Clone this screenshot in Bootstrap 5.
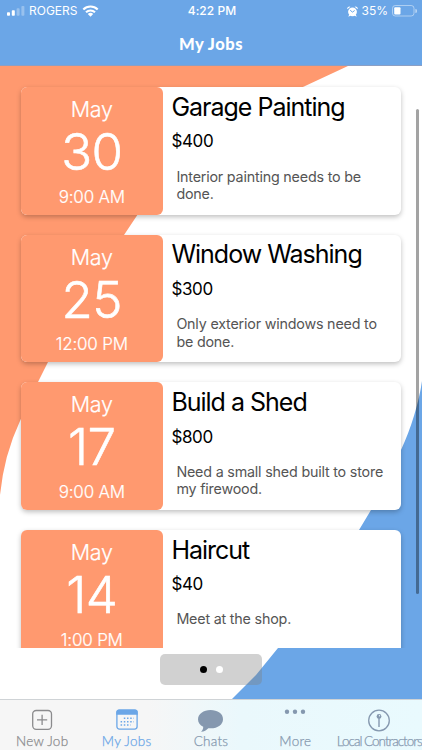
<!DOCTYPE html>
<html lang="en">
<head>
<meta charset="utf-8">
<meta name="viewport" content="width=device-width, initial-scale=1">
<title>My Jobs</title>
<link href="https://cdn.jsdelivr.net/npm/bootstrap@5.3.0/dist/css/bootstrap.min.css" rel="stylesheet">
<style>
  :root { --sky: #6ba6e7; --coral: #ff996f; }
  body { font-family: Inter, "Liberation Sans", sans-serif; color: #000; }
  .phone { height: 750px; width: 422px; }
  .top { height: 66px; background: var(--sky); border-bottom: 1px solid #8c9fc4; }
  .status { height: 22px; font-size: 12px; line-height: 22px; padding: 0 5px 0 7px; }
  .status > div { flex: 1 1 0; }
  .clock { font-weight: 500; letter-spacing: .05px; }
  .heading { font: 900 16.5px/20px Lato, sans-serif; letter-spacing: .5px; padding-top: 12px; }
  .jobs { height: 582px; padding: 21px 20.6px 0 20.6px; gap: 20px; z-index: 1; }
  .job { height: 127.6px; border-radius: 6px; background: #fff; box-shadow: 0 2px 5px rgba(0,0,0,.25); }
  .when { width: 142.4px; border-radius: 6px; background: var(--coral); color: #fff; font-weight: 300; }
  .month { font-size: 21.5px; line-height: 26px; padding-top: 9px; letter-spacing: -.2px; -webkit-text-stroke: .2px #fff; }
  .day { font-size: 51px; line-height: 58px; letter-spacing: -.6px; -webkit-text-stroke: .6px #fff; padding-top: 1px; }
  .hour { font-size: 17px; line-height: 22px; padding-top: 4.8px; letter-spacing: -.2px; -webkit-text-stroke: .2px #fff; }
  .what { padding: 4.8px 8px 0 8.4px; }
  .title { font-size: 25px; line-height: 30px; letter-spacing: -1px; }
  .price { font-size: 17px; line-height: 22px; margin-top: 8.6px; letter-spacing: -.35px; }
  .note { font-size: 14.3px; line-height: 17.5px; margin: 15.2px 0 0 5px; color: #555; letter-spacing: -.19px; }
  .pager { width: 102px; height: 31px; margin: 6px 0 0 160px; border-radius: 5px; background: rgba(128,128,128,.36); gap: 8.5px; z-index: 1; padding-left: 1px; }
  .pager span { width: 7.5px; height: 7.5px; }
  .scroll { right: 3px; top: 43px; width: 3px; height: 485px; background: rgba(0,0,0,.36); z-index: 2; }
  .tabs { height: 51px; border-top: 1px solid #cfd3d6; background: linear-gradient(90deg, #f6f6f6 0 35%, #eaf8fc 57%, #e9fafe); font: 300 13.5px/16px Lato, sans-serif; color: #8b8b8d; letter-spacing: .25px; }
  .tabs > a { flex: 0 0 84.4px; min-width: 0; height: 50px; color: inherit; padding-top: 8px; }
  .tabs svg { height: 24px; }
  .tabs span { margin-top: 1px; white-space: nowrap; -webkit-text-stroke: .25px currentColor; }
  .tabs > a.active { color: var(--sky); }
  .tabs > a.cool { color: #8598af; }
  .tabs > a:last-child { padding-right: 1px; }
  .tabs .tight { letter-spacing: -1px; }
</style>
</head>
<body>
<div class="phone d-flex flex-column overflow-hidden position-relative">
  <header class="top text-white flex-shrink-0">
    <div class="status d-flex">
      <div class="d-flex align-items-center">
        <svg width="18" height="10" viewBox="0 0 18 10" fill="#fff"><rect y="6.3" width="3" height="3.5" rx=".8"/><rect x="4.8" y="4.3" width="3" height="5.5" rx=".8"/><g opacity=".3"><rect x="9.6" y="2.2" width="3" height="7.6" rx=".8"/><rect x="14.4" width="3" height="9.8" rx=".8"/></g></svg>
        <span class="ms-1">ROGERS</span>
        <svg class="ms-1" width="17" height="12" viewBox="0 0 17 12" fill="none" stroke="#fff" stroke-width="2.1"><path d="M1.3 4.5a10.2 10.2 0 0 1 14.4 0M4 7.3a6.4 6.4 0 0 1 9 0"/><path d="M8.5 11.8L5.8 9.1a3.8 3.8 0 0 1 5.4 0z" fill="#fff" stroke="none"/></svg>
      </div>
      <div class="clock text-center">4:22 PM</div>
      <div class="d-flex align-items-center justify-content-end">
        <svg width="11" height="11" viewBox="0 0 11 11"><g fill="#fff"><circle cx="5.5" cy="5.8" r="4.4"/><path d="M.3 3.2A2.2 2.2 0 0 1 3.4.7zM10.7 3.2A2.2 2.2 0 0 0 7.6.7zM1.3 10.7l1-2.4 1.5 1.2zM9.7 10.7l-1-2.4-1.5 1.2z"/></g><path d="M3.2 4.3l2.3 1.8 2.2-1.6" fill="none" stroke="#6ba6e7"/></svg>
        <span class="ms-1">35%</span>
        <svg class="ms-1" width="25" height="12" viewBox="0 0 25 12"><rect x=".5" y=".5" width="21.5" height="10.5" rx="2.8" fill="none" stroke="#fff" stroke-opacity=".45"/><rect x="2.2" y="2.2" width="6.3" height="7.2" rx="1" fill="#fff"/><path d="M23.3 4v4a2 2 0 0 0 0-4z" fill="#fff" opacity=".5"/></svg>
      </div>
    </div>
    <h1 class="heading text-center m-0">My Jobs</h1>
  </header>

  <main class="position-relative flex-grow-1 overflow-hidden">
    <svg class="position-absolute top-0 start-0" width="422" height="633" viewBox="0 66 422 633"><path fill="#ff996f" d="M0 66H348L304 86.500C220 125 170 164 138 214L124 235 48 362 38 382 20 421Q4 455 0 495z"/><path fill="#6ba6e7" d="M422 381C419 402 411 429 401 450L371 510 359 530C335 574 310 609 278 648L256 675 232 699H422z"/></svg>
    <section class="jobs d-flex flex-column overflow-hidden position-relative">
      <article class="job d-flex flex-shrink-0">
        <div class="when text-center flex-shrink-0"><div class="month">May</div><div class="day">30</div><div class="hour">9:00 AM</div></div>
        <div class="what"><h2 class="title m-0 fw-normal">Garage Painting</h2><div class="price">$400</div><p class="note">Interior painting needs to be<br>done.</p></div>
      </article>
      <article class="job d-flex flex-shrink-0">
        <div class="when text-center flex-shrink-0"><div class="month">May</div><div class="day">25</div><div class="hour">12:00 PM</div></div>
        <div class="what"><h2 class="title m-0 fw-normal">Window Washing</h2><div class="price">$300</div><p class="note">Only exterior windows need to<br>be done.</p></div>
      </article>
      <article class="job d-flex flex-shrink-0">
        <div class="when text-center flex-shrink-0"><div class="month">May</div><div class="day">17</div><div class="hour">9:00 AM</div></div>
        <div class="what"><h2 class="title m-0 fw-normal">Build a Shed</h2><div class="price">$800</div><p class="note">Need a small shed built to store<br>my firewood.</p></div>
      </article>
      <article class="job d-flex flex-shrink-0">
        <div class="when text-center flex-shrink-0"><div class="month">May</div><div class="day">14</div><div class="hour">1:00 PM</div></div>
        <div class="what"><h2 class="title m-0 fw-normal">Haircut</h2><div class="price">$40</div><p class="note">Meet at the shop.</p></div>
      </article>
    </section>
    <div class="pager d-flex align-items-center justify-content-center position-relative"><span class="rounded-circle bg-black"></span><span class="rounded-circle bg-white"></span></div>
    <div class="scroll position-absolute rounded-pill"></div>
  </main>

  <nav class="tabs d-flex flex-shrink-0">
    <a class="d-flex flex-column align-items-center text-decoration-none"><svg width="24" viewBox="0 0 24 24" fill="none" stroke="currentColor" stroke-width="1.3"><rect x="2.700" y="2.500" width="18.800" height="18.800" rx="3.500"/><path d="M12.100 6.800v10.200M7 11.900h10.200"/></svg><span>New Job</span></a>
    <a class="active d-flex flex-column align-items-center text-decoration-none"><svg width="24" viewBox="0 0 24 24"><rect x="1.900" y="2.200" width="20.200" height="18.900" rx="2.500" fill="none" stroke="currentColor" stroke-width="1.300"/><path d="M1.300 6.800V4a2.500 2.500 0 0 1 2.500-2.500h16.400A2.500 2.500 0 0 1 22.700 4v2.800z" fill="currentColor"/><path d="M8.800 10.300h10M5.600 13.700h13.200M5.600 17h10" fill="none" stroke="currentColor" stroke-width="1.500" stroke-dasharray="1.500 1.700"/></svg><span>My Jobs</span></a>
    <a class="cool d-flex flex-column align-items-center text-decoration-none"><svg width="28" viewBox="0 0 28 24" fill="currentColor"><path d="M13.500 2C6.500 2 1 6 1 11.200c0 3.400 2.100 6 5.200 7.500.1 2-.7 3.700-2.200 5.100 3.200-.3 5.600-1.700 7.300-3.600 8.700.9 14.700-3.300 14.700-9S20.500 2 13.500 2z"/></svg><span>Chats</span></a>
    <a class="cool d-flex flex-column align-items-center text-decoration-none"><svg width="24" viewBox="0 0 24 24" fill="currentColor"><circle cx="4" cy="3.700" r="2.200"/><circle cx="12" cy="3.700" r="2.200"/><circle cx="20" cy="3.700" r="2.200"/></svg><span>More</span></a>
    <a class="cool d-flex flex-column align-items-center text-decoration-none"><svg width="24" viewBox="0 0 24 24"><circle cx="12" cy="12.500" r="10.300" fill="none" stroke="currentColor" stroke-width="1.300"/><path d="M12 9v10" stroke="currentColor" stroke-width="1.400"/><circle cx="12" cy="8.400" r="2.400" fill="currentColor"/><circle cx="12.500" cy="7.700" r=".7" fill="#e9fafe"/></svg><span class="tight">Local Contractors</span></a>
  </nav>
</div>
<script src="https://cdn.jsdelivr.net/npm/bootstrap@5.3.0/dist/js/bootstrap.bundle.min.js"></script>
</body>
</html>
